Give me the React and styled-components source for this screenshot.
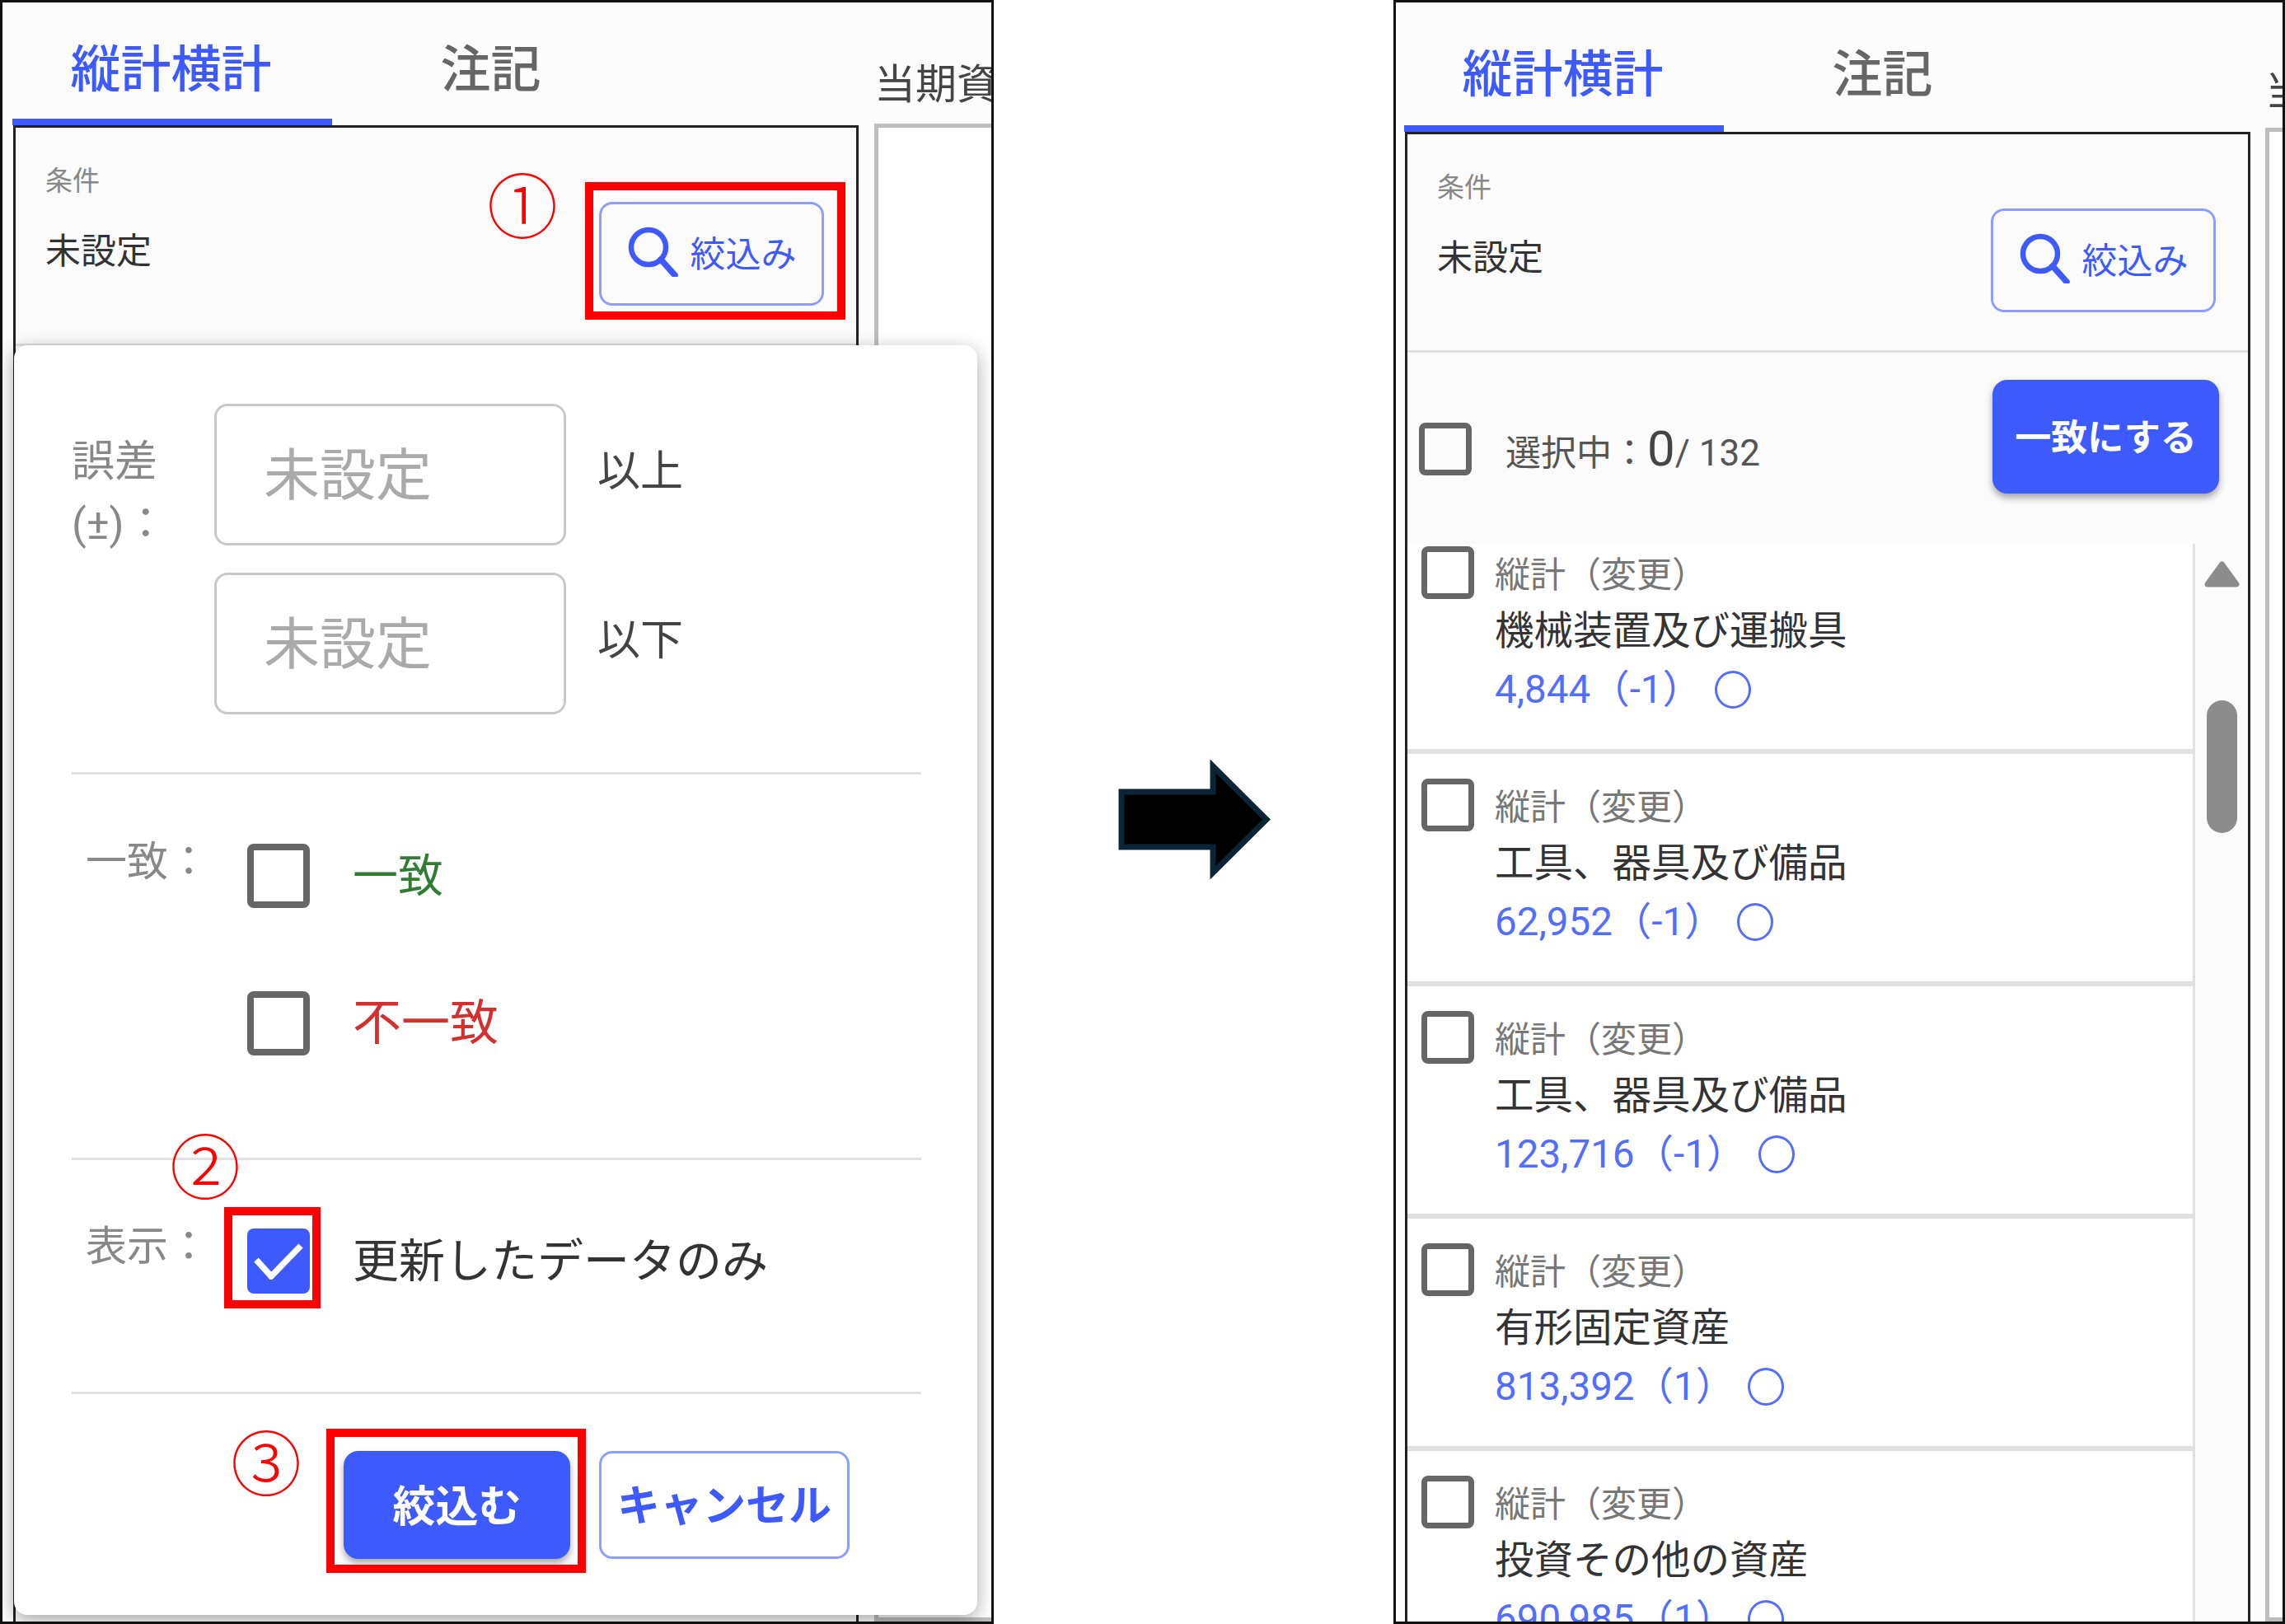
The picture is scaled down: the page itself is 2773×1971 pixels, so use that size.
import React from "react";
import styled, { createGlobalStyle } from "styled-components";

const BLUE = "#3d5afe";
const FONT = `Roboto, "Noto Sans CJK JP", sans-serif`;

const Global = createGlobalStyle`
  html, body { margin: 0; padding: 0; background: #fff; }
  body { font-family: ${FONT}; color: #333; }
  * { box-sizing: border-box; }
`;

const Slide = styled.div`
  width: 2773px;
  height: 1971px;
  display: flex;
  align-items: stretch;
  justify-content: space-between;
  overflow: hidden;
`;

const Window = styled.div`
  position: relative;
  width: ${(p) => p.$width}px;
  height: 100%;
  border: 3px solid #111;
  background: #fcfcfc;
  display: flex;
  gap: ${(p) => p.$gap}px;
  padding-left: ${(p) => p.$inset}px;
  overflow: hidden;
`;

const MainColumn = styled.div`
  width: 1026px;
  flex: none;
  height: 100%;
  display: flex;
  flex-direction: column;
`;

const SideColumn = styled.div`
  flex: 1;
  min-width: 0;
  display: flex;
  flex-direction: column;
`;

const SideTitle = styled.div`
  height: ${(p) => p.$height}px;
  padding: ${(p) => p.$top}px 0 0 0;
  font-size: 50px;
  line-height: 60px;
  color: #444;
  white-space: nowrap;
  overflow: hidden;
`;

const SidePanel = styled.div`
  flex: 1;
  border: 5px solid #bdbdbd;
  border-right: none;
  background: #fff;
`;

const TabBar = styled.div`
  height: ${(p) => p.$height}px;
  display: flex;
  align-items: flex-end;
  margin-left: -1px;
`;

const Tab = styled.div`
  width: 388px;
  height: 70px;
  padding: 0 3px ${(p) => p.$pad}px 0;
  display: flex;
  align-items: flex-end;
  justify-content: center;
  font-size: 61px;
  line-height: 70px;
  font-weight: 500;
  box-sizing: content-box;
  width: 385px;
  color: ${(p) => (p.$active ? BLUE : "#666")};
  border-bottom: 8px solid ${(p) => (p.$active ? BLUE : "transparent")};
`;

const Panel = styled.div`
  flex: 1;
  min-height: 0;
  border: 3px solid #222;
  border-bottom: none;
  background: #fbfbfb;
  display: flex;
  flex-direction: column;
  overflow: hidden;
`;

const FilterBar = styled.div`
  flex: none;
  height: 265px;
  padding: 45px 39px 0 36px;
  display: flex;
  justify-content: space-between;
  align-items: flex-start;
  border-bottom: 3px solid #e0e0e0;
`;

const CondCaption = styled.div`
  font-size: 33px;
  line-height: 40px;
  color: #888;
`;

const CondValue = styled.div`
  margin-top: 40px;
  font-size: 43px;
  line-height: 50px;
  color: #333;
`;

const OutlineButton = styled.button`
  width: ${(p) => p.$w}px;
  height: ${(p) => p.$h}px;
  margin-top: ${(p) => p.$mt || 0}px;
  border: 3px solid #8c9eff;
  border-radius: 16px;
  background: transparent;
  color: ${BLUE};
  font-family: ${FONT};
  font-size: ${(p) => p.$fs}px;
  font-weight: ${(p) => p.$fw || 400};
  display: flex;
  align-items: center;
  justify-content: center;
  gap: ${(p) => p.$gap || 0}px;
  padding: 0 0 6px;
`;

const FillButton = styled.button`
  width: ${(p) => p.$w}px;
  height: ${(p) => p.$h}px;
  border: none;
  border-radius: 18px;
  background: ${BLUE};
  color: #fff;
  font-family: ${FONT};
  font-size: ${(p) => p.$fs}px;
  font-weight: 700;
  box-shadow: 0 5px 9px rgba(0, 0, 0, 0.35);
  padding: 0 0 5px;
`;

const Box = styled.span`
  flex: none;
  display: flex;
  align-items: center;
  justify-content: center;
  width: ${(p) => p.$w}px;
  height: ${(p) => p.$h}px;
  border: ${(p) => (p.$checked ? "none" : `${p.$b || 8}px solid #666`)};
  border-radius: 8px;
  background: ${(p) => (p.$checked ? BLUE : "transparent")};
`;

const SelectBar = styled.div`
  flex: none;
  height: 232px;
  padding: 33px 35px 0 14px;
  display: flex;
  justify-content: space-between;
  align-items: flex-start;
`;

const SelectInfo = styled.div`
  margin-top: 46px;
  display: flex;
  align-items: center;
  gap: 41px;
`;

const Count = styled.div`
  display: flex;
  align-items: baseline;
  font-size: 43px;
  line-height: 64px;
  color: #555;
  margin-top: 6px;
`;

const CountBig = styled.span`
  font-size: 60px;
  color: #444;
`;

const CountTotal = styled.span`
  font-size: 44px;
  white-space: pre;
`;

const ListArea = styled.div`
  flex: 1;
  min-height: 0;
  display: flex;
  overflow: hidden;
`;

const List = styled.div`
  width: 953px;
  flex: none;
  background: #fff;
  overflow: hidden;
`;

const ListScroller = styled.div`
  margin-top: -27px;
`;

const Item = styled.div`
  height: 282px;
  padding: 30px 0 0 17px;
  display: flex;
  gap: 25px;
  border-bottom: 6px solid #e0e0e0;
`;

const ItemBody = styled.div`
  padding-top: 12px;
`;

const ItemKind = styled.div`
  font-size: 43px;
  line-height: 46px;
  color: #777;
  white-space: nowrap;
`;

const ItemName = styled.div`
  margin-top: 19px;
  font-size: 47.5px;
  line-height: 52px;
  color: #333;
  white-space: nowrap;
`;

const ItemValue = styled.div`
  margin-top: 19px;
  font-size: 47.5px;
  line-height: 52px;
  color: #536dfe;
  white-space: nowrap;
  display: flex;
  align-items: center;
`;

const ItemMark = styled.span`
  margin-left: 16px;
  width: 44px;
  height: 46px;
  border: 3px solid #536dfe;
  border-radius: 50%;
`;

const ScrollTrack = styled.div`
  flex: 1;
  border-left: 3px solid #e0e0e0;
  padding-top: 21px;
  display: flex;
  flex-direction: column;
  align-items: center;
`;

const ScrollThumb = styled.div`
  margin-top: 135px;
  width: 37px;
  height: 161px;
  border-radius: 19px;
  background: #8c8c8c;
`;

const Popup = styled.div`
  position: absolute;
  left: 14px;
  top: 416px;
  width: 1169px;
  height: 1541px;
  background: #fff;
  border-radius: 16px;
  box-shadow: 0 6px 22px rgba(0, 0, 0, 0.34);
  display: flex;
  flex-direction: column;
`;

const Section = styled.div`
  padding: ${(p) => p.$pt}px 0 ${(p) => p.$pb}px ${(p) => p.$pl}px;
  display: flex;
  align-items: flex-start;
`;

const Divider = styled.div`
  height: 3px;
  margin: 0 68px 0 70px;
  background: #e0e0e0;
`;

const RangeLabel = styled.div`
  width: 173px;
  margin-top: 33px;
  font-size: 52px;
  line-height: 76px;
  color: #888;
`;

const RangeGrid = styled.div`
  display: grid;
  grid-template-columns: 427px auto;
  column-gap: 38px;
  row-gap: 33px;
  align-items: center;
`;

const Field = styled.div`
  height: 172px;
  border: 3px solid #c8c8c8;
  border-radius: 16px;
  padding: 0 0 9px 57px;
  display: flex;
  align-items: center;
  font-size: 68px;
  color: #aaa;
`;

const Unit = styled.div`
  font-size: 52px;
  line-height: 60px;
  color: #444;
  margin-top: -7px;
`;

const GroupLabel = styled.div`
  width: 196px;
  margin-top: -8px;
  font-size: 50px;
  line-height: 60px;
  color: #888;
  white-space: nowrap;
`;

const Options = styled.div`
  display: flex;
  flex-direction: column;
  gap: 101px;
`;

const Option = styled.div`
  display: flex;
  align-items: center;
  gap: 52px;
  font-size: ${(p) => p.$fs}px;
  line-height: 60px;
  color: ${(p) => p.$color};
  white-space: nowrap;
`;

const Actions = styled.div`
  padding: 69px 155px 0 0;
  display: flex;
  justify-content: flex-end;
  gap: 35px;
`;

const RedFrame = styled.div`
  position: absolute;
  left: ${(p) => p.$x - 3}px;
  top: ${(p) => p.$y - 3}px;
  width: ${(p) => p.$w}px;
  height: ${(p) => p.$h}px;
  border: 10px solid #f00;
  pointer-events: none;
`;

const StepMark = styled.div`
  position: absolute;
  left: ${(p) => p.$x - 3}px;
  top: ${(p) => p.$y - 3}px;
  font-family: "Noto Sans CJK JP", sans-serif;
  font-size: 86px;
  font-weight: 300;
  line-height: 86px;
  color: #f00;
`;

const ArrowWrap = styled.div`
  align-self: center;
  display: flex;
  margin: 18px 0 0 4px;
`;

const SearchIcon = () => (
  <svg width="62" height="62" viewBox="0 0 62 62" fill="none" stroke={BLUE}>
    <circle cx="26" cy="26" r="21" strokeWidth="6.5" />
    <path d="M41 41 L58 60" strokeWidth="7.5" strokeLinecap="round" />
  </svg>
);

const CheckIcon = () => (
  <svg width="60" height="44" viewBox="0 0 60 44" fill="none" stroke="#fff">
    <path d="M3 20 L21 40 L57 3" strokeWidth="7.5" />
  </svg>
);

const Arrow = () => (
  <svg width="187" height="149" viewBox="0 0 187 149">
    <path
      d="M4 41 H115 V10 L180 74.5 L115 139 V108 H4 Z"
      fill="#000"
      stroke="#0a2535"
      strokeWidth="7"
    />
  </svg>
);

const ScrollUp = () => (
  <svg width="43" height="34" viewBox="0 0 43 34">
    <path
      d="M21.5 4 L39 28 H4 Z"
      fill="#8c8c8c"
      stroke="#8c8c8c"
      strokeWidth="7"
      strokeLinejoin="round"
    />
  </svg>
);

const Tabs = ({ height, pad }) => (
  <TabBar $height={height}>
    <Tab $active $pad={pad}>縦計横計</Tab>
    <Tab $pad={pad}>注記</Tab>
  </TabBar>
);

const Filter = () => (
  <FilterBar>
    <div>
      <CondCaption>条件</CondCaption>
      <CondValue>未設定</CondValue>
    </div>
    <OutlineButton $w={273} $h={126} $mt={45} $fs={43} $gap={15}>
      <SearchIcon />
      絞込み
    </OutlineButton>
  </FilterBar>
);

const items = [
  ["機械装置及び運搬具", "4,844（-1）"],
  ["工具、器具及び備品", "62,952（-1）"],
  ["工具、器具及び備品", "123,716（-1）"],
  ["有形固定資産", "813,392（1）"],
  ["投資その他の資産", "690,985（1）"],
];

export default function App() {
  return (
    <Slide>
      <Global />
      <Window $width={1206} $inset={13} $gap={19}>
        <MainColumn>
          <Tabs height={149} pad={24} />
          <Panel>
            <Filter />
          </Panel>
        </MainColumn>
        <SideColumn>
          <SideTitle $height={147} $top={70}>当期資産</SideTitle>
          <SidePanel />
        </SideColumn>

        <Popup>
          <Section $pt={71} $pb={70} $pl={70}>
            <RangeLabel>
              誤差
              <br />
              (±)：
            </RangeLabel>
            <RangeGrid>
              <Field>未設定</Field>
              <Unit>以上</Unit>
              <Field>未設定</Field>
              <Unit>以下</Unit>
            </RangeGrid>
          </Section>
          <Divider />
          <Section $pt={84} $pb={124} $pl={87}>
            <GroupLabel>一致：</GroupLabel>
            <Options>
              <Option $fs={55} $color="#2e7d32">
                <Box $w={76} $h={78} />
                一致
              </Option>
              <Option $fs={59} $color="#d32f2f">
                <Box $w={76} $h={78} />
                不一致
              </Option>
            </Options>
          </Section>
          <Divider />
          <Section $pt={83} $pb={119} $pl={87}>
            <GroupLabel>表示：</GroupLabel>
            <Options>
              <Option $fs={56} $color="#333">
                <Box $w={76} $h={79} $checked>
                  <CheckIcon />
                </Box>
                更新したデータのみ
              </Option>
            </Options>
          </Section>
          <Divider />
          <Actions>
            <FillButton $w={275} $h={131} $fs={52}>絞込む</FillButton>
            <OutlineButton $w={304} $h={131} $fs={52} $fw={700}>キャンセル</OutlineButton>
          </Actions>
        </Popup>

        <RedFrame $x={710} $y={221} $w={316} $h={167} />
        <RedFrame $x={272} $y={1465} $w={117} $h={123} />
        <RedFrame $x={396} $y={1734} $w={315} $h={175} />
        <StepMark $x={591} $y={203}>①</StepMark>
        <StepMark $x={206} $y={1369}>②</StepMark>
        <StepMark $x={280} $y={1729}>③</StepMark>
      </Window>

      <ArrowWrap>
        <Arrow />
      </ArrowWrap>

      <Window $width={1082} $inset={11} $gap={18}>
        <MainColumn>
          <Tabs height={157} pad={26} />
          <Panel>
            <Filter />
            <SelectBar>
              <SelectInfo>
                <Box $w={64} $h={64} $b={7} />
                <Count>
                  選択中：<CountBig>0</CountBig>
                  <CountTotal>/ 132</CountTotal>
                </Count>
              </SelectInfo>
              <FillButton $w={275} $h={138} $fs={44}>一致にする</FillButton>
            </SelectBar>
            <ListArea>
              <List>
                <ListScroller>
                  {items.map(([name, value], i) => (
                    <Item key={i}>
                      <Box $w={64} $h={64} $b={7} />
                      <ItemBody>
                        <ItemKind>縦計（変更）</ItemKind>
                        <ItemName>{name}</ItemName>
                        <ItemValue>
                          {value}
                          <ItemMark />
                        </ItemValue>
                      </ItemBody>
                    </Item>
                  ))}
                </ListScroller>
              </List>
              <ScrollTrack>
                <ScrollUp />
                <ScrollThumb />
              </ScrollTrack>
            </ListArea>
          </Panel>
        </MainColumn>
        <SideColumn>
          <SideTitle $height={152} $top={78}>当期資産</SideTitle>
          <SidePanel />
        </SideColumn>
      </Window>
    </Slide>
  );
}
